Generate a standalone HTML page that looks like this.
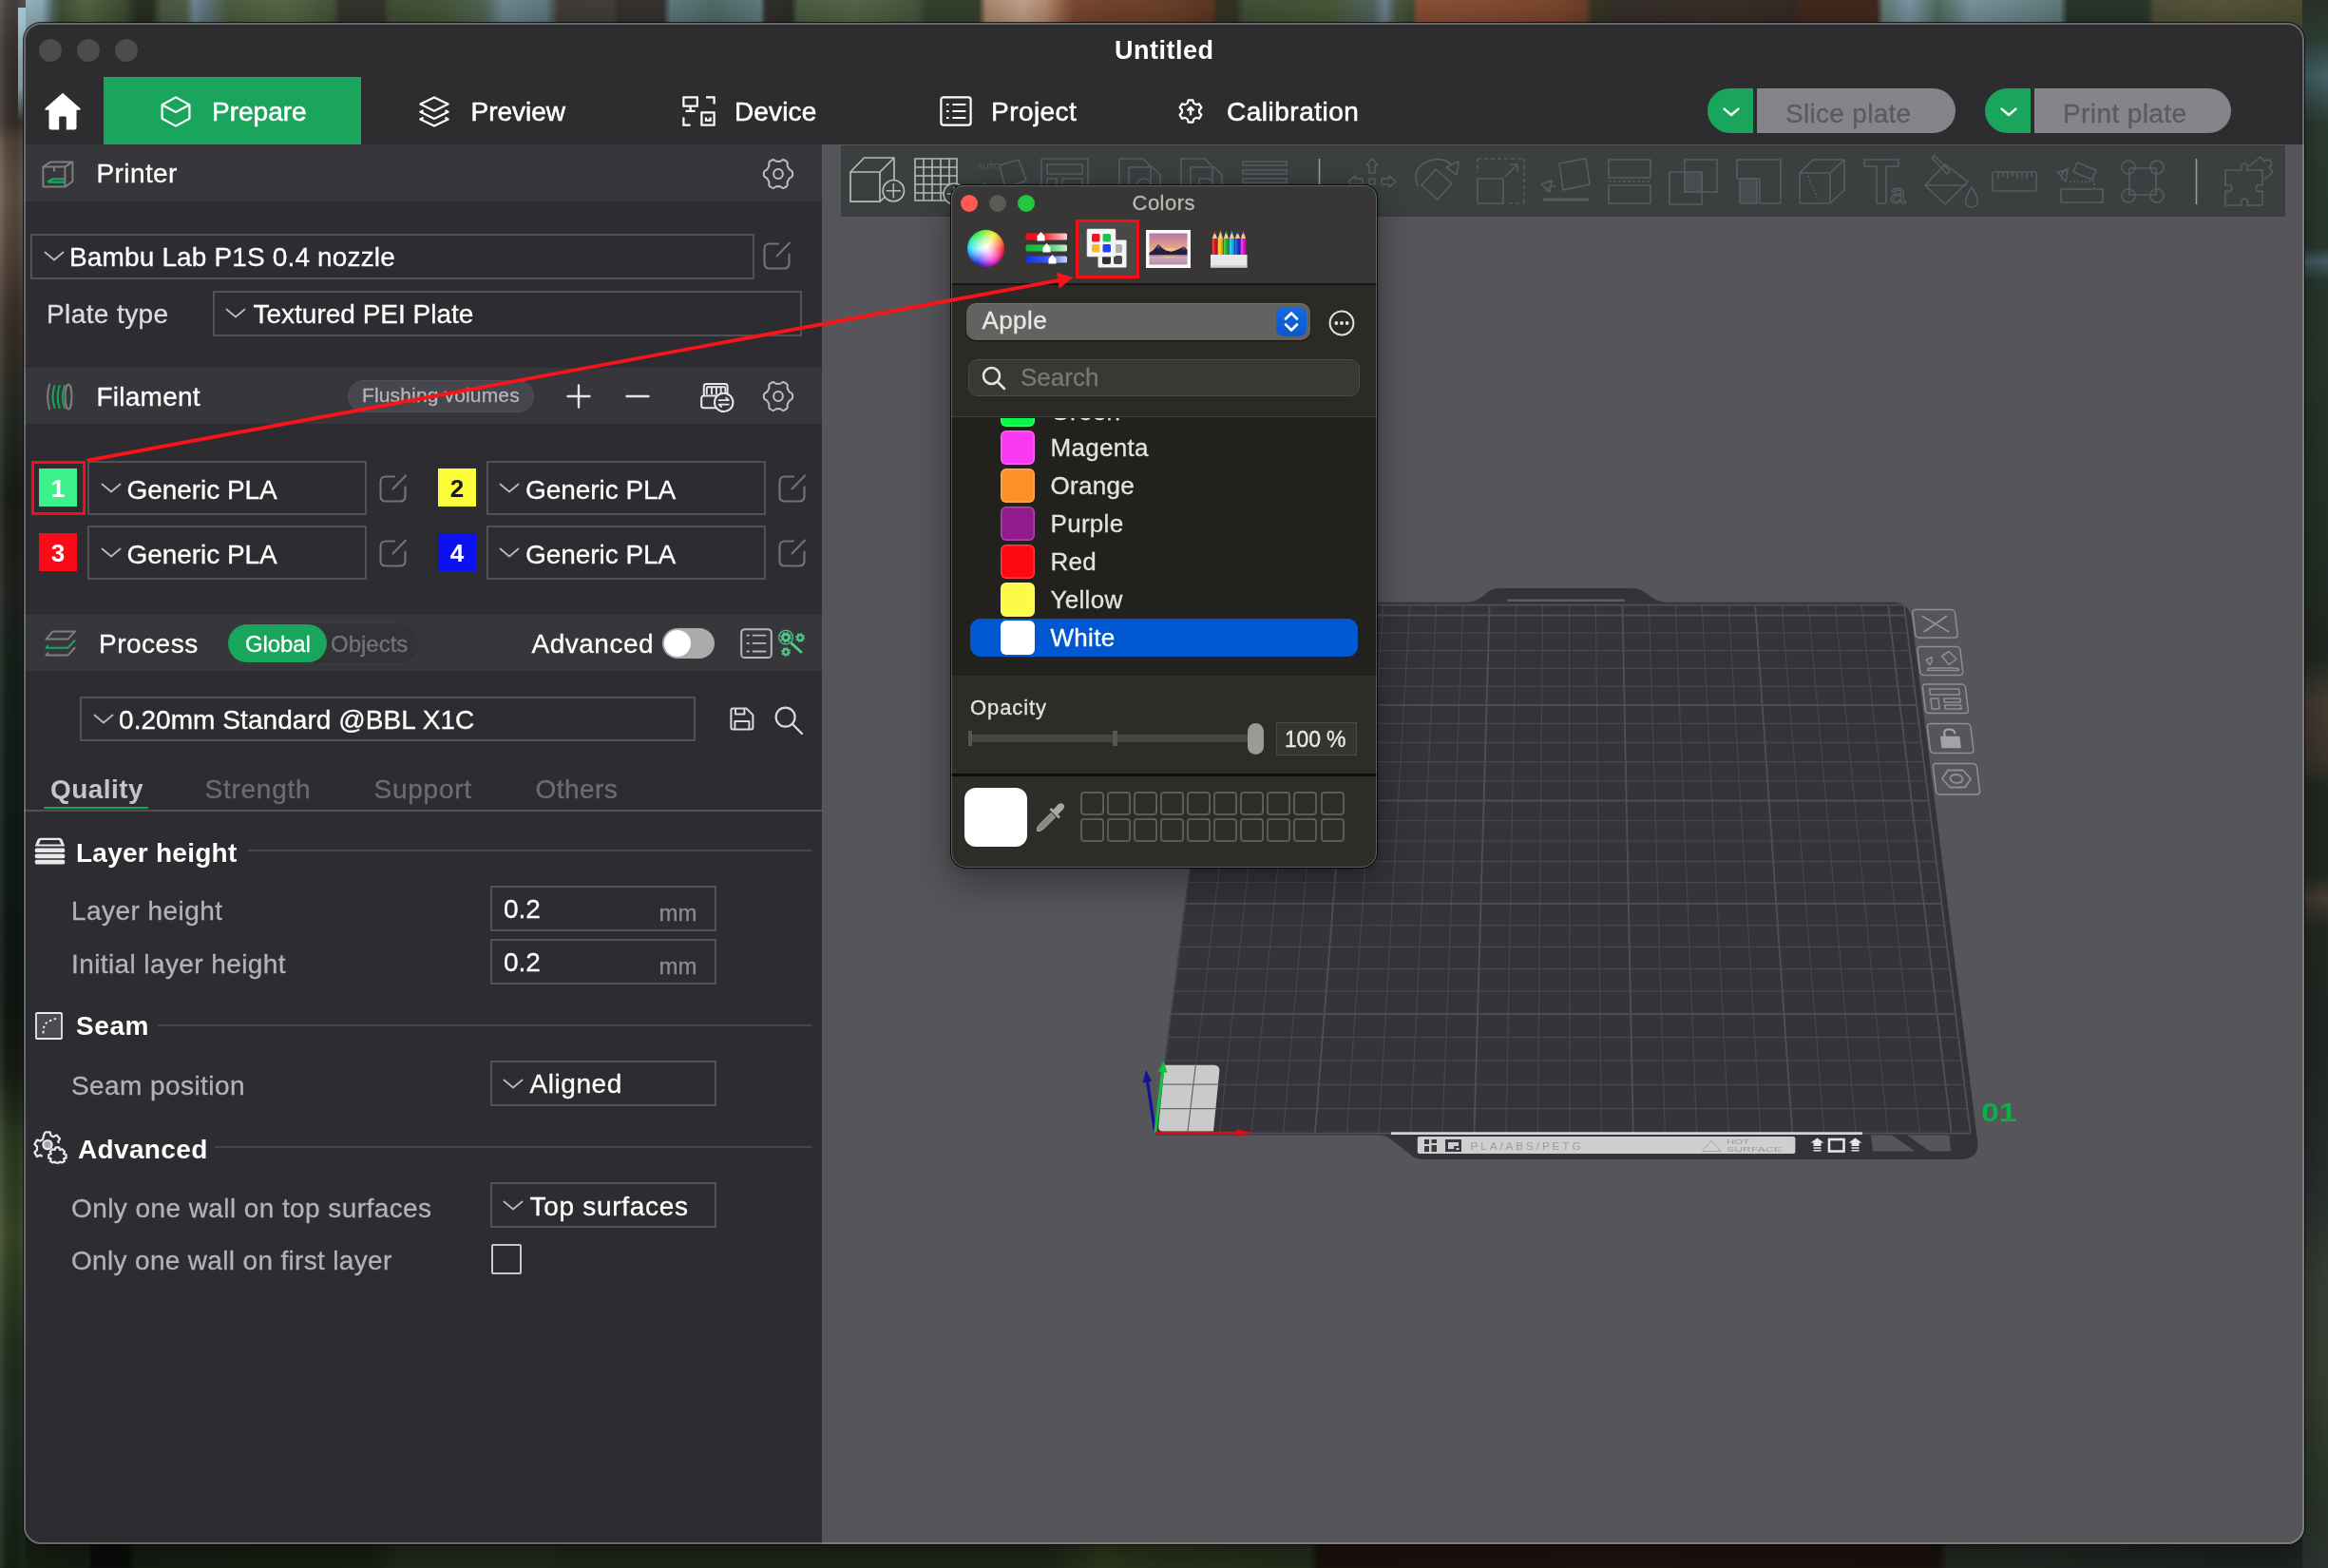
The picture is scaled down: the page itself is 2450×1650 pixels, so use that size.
<!DOCTYPE html>
<html><head><meta charset="utf-8"><title>Untitled</title>
<style>
*{box-sizing:border-box;margin:0;padding:0}
html,body{width:2450px;height:1650px;overflow:hidden}
body{font-family:"Liberation Sans",sans-serif;position:relative;background:#2f3a2c;color:#fff}
.a{position:absolute}
.t{position:absolute;white-space:pre;font-size:28px;line-height:34px;letter-spacing:.4px;color:#fff;-webkit-text-stroke:.3px}
svg{position:absolute;overflow:visible}
/* desktop wallpaper */
#bgT{left:0;top:0;width:2450px;height:46px;background:linear-gradient(180deg,rgba(0,0,0,.10),rgba(0,0,0,.22)),linear-gradient(90deg,#4a4440 0px,#4a4044 19px,#a4c8d4 24px,#9cc0cc 44px,#5a7068 56px,#4a5a3e 64px,#5f7048 90px,#46563a 130px,#2e3528 145px,#2e3528 160px,#55634a 170px,#5a6a50 195px,#7a98a8 205px,#6a8088 218px,#566848 240px,#62744e 300px,#4e5e40 350px,#3a3a34 358px,#3a3a34 403px,#48583c 410px,#506242 470px,#5a7060 510px,#7a98a0 530px,#6a8890 575px,#4a4440 588px,#4c4642 645px,#3c3836 652px,#3c3836 698px,#6a8890 706px,#5a7870 750px,#6a8a90 800px,#3a3632 806px,#33322c 832px,#55684a 840px,#5e7250 900px,#4e6044 965px,#3c4a34 975px,#3c4a34 1030px,#c0957a 1038px,#d8b49a 1075px,#c89c80 1100px,#a06a4a 1119px,#8a5238 1130px,#804c34 1165px,#7a4a30 1220px,#683e28 1275px,#3a3a2a 1282px,#3a3a2a 1300px,#4a5a3e 1310px,#52623f 1400px,#5a7068 1445px,#7a90a0 1458px,#52624a 1470px,#4a563a 1486px,#9a5a3c 1492px,#94563a 1560px,#8a4e32 1640px,#7a4630 1668px,#3c3a28 1676px,#3c3a28 1692px,#3c3430 1698px,#40362f 1800px,#3a302a 1888px,#4a2e22 1895px,#4a2e22 1975px,#6a8a80 1982px,#8aa8b8 2010px,#5a7868 2040px,#86a4b0 2075px,#7a98a0 2120px,#6a8888 2168px,#2e3e30 2176px,#2e3e30 2260px,#5a5a40 2268px,#62603f 2340px,#55563c 2428px,#2a2e28 2436px,#2a2e28 2450px)}
#bgB{left:0;top:1604px;width:2450px;height:46px;background:linear-gradient(90deg,#182215 0px,#182215 92px,#0b0f0a 98px,#0b0f0a 134px,#182214 142px,#192414 390px,#25301e 420px,#25301e 575px,#212c1b 600px,#212c1b 1100px,#323f21 1160px,#2c381f 1225px,#29351f 1378px,#1e140e 1388px,#221712 1700px,#1e140e 2040px,#292e28 2050px,#252b26 2250px,#1f2522 2450px)}
#bgL{left:0;top:0;width:27px;height:1650px;background:linear-gradient(90deg,rgba(255,255,255,.07) 0,rgba(0,0,0,.12) 7px,rgba(0,0,0,.18) 17px,rgba(0,0,0,0) 23px),linear-gradient(180deg,#544e4a 0px,#46403c 40px,#4a403a 130px,#6a5a4c 150px,#7a6a5a 200px,#6e5c4e 250px,#5a4a40 300px,#4a3e36 340px,#3a382f 400px,#2e3630 440px,#22261f 520px,#2a2c28 620px,#1c2a22 700px,#16221c 900px,#141c16 1050px,#1e261a 1130px,#3a4a2c 1200px,#4a5a34 1300px,#2e3e28 1420px,#28382e 1520px,#1e3020 1600px,#182818 1650px)}
#bgR{left:2423px;top:0;width:27px;height:1650px;background:linear-gradient(180deg,#2a2e28 0px,#2e3e34 40px,#4a6870 80px,#2e3e34 130px,#2a3a30 260px,#48646c 275px,#2a3a30 295px,#26322a 560px,#232a24 690px,#4a4034 740px,#3e382e 800px,#232a24 830px,#232a24 920px,#4a4034 945px,#262c24 975px,#222a26 1100px,#2a3230 1250px,#3a4238 1350px,#3a4236 1450px,#2e3a2c 1550px,#2c3430 1650px)}
/* main window */
#win{left:25px;top:24px;width:2400px;height:1601px;border-radius:18px;overflow:hidden;background:#2d2d30;box-shadow:0 0 0 1px rgba(0,0,0,.75),0 18px 50px rgba(0,0,0,.45)}
#in{left:-25px;top:-24px;width:2450px;height:1650px;will-change:transform}
#rim{left:25px;top:24px;width:2400px;height:1601px;border-radius:18px;border:2px solid rgba(165,165,170,.5);pointer-events:none}
.tl{width:24px;height:24px;border-radius:50%;background:#4c4c4f;top:41px}
.hdr{left:25px;width:840px;background:#36363b}
.box{border:2px solid #515157;background:#2d2d31}
</style></head><body>
<div class="a" id="bgT"></div><div class="a" id="bgB"></div><div class="a" id="bgL"></div><div class="a" id="bgR"></div><div class="a" id="sky1" style="left:19px;top:8px;width:8px;height:120px;background:linear-gradient(180deg,#a4c8d4 0,#9cc0cc 70%,rgba(150,180,190,0) 100%)"></div>
<div class="a" id="win"><div class="a" id="in">

<!-- TITLEBAR -->
<div class="a tl" style="left:41px"></div><div class="a tl" style="left:81px"></div><div class="a tl" style="left:121px"></div>
<div class="t" style="left:1173px;top:35.5px;font-weight:700;-webkit-text-stroke:0;font-size:27px;letter-spacing:.5px">Untitled</div>
<!--TABS-->
<svg style="left:47px;top:97px" width="38" height="40" viewBox="0 0 38 40"><path d="M19 .8 L37.6 17.2 Q38.3 18.6 36.8 18.8 L33.5 18.8 L33.5 37.6 Q33.5 39.4 31.7 39.4 L22.8 39.4 L22.8 27 Q22.8 25.6 21.4 25.6 L16.6 25.6 Q15.2 25.6 15.2 27 L15.2 39.4 L6.3 39.4 Q4.5 39.4 4.5 37.6 L4.5 18.8 L1.2 18.8 Q-.3 18.6 .4 17.2 Z" fill="#fff"/></svg>
<div class="a" style="left:109px;top:81px;width:271px;height:71px;background:#19a65c"></div>
<svg style="left:169px;top:101px" width="32" height="33" viewBox="0 0 32 33" fill="none" stroke="#fff" stroke-width="2.2" stroke-linejoin="round"><path d="M16 1.4 L30.4 9.2 L30.4 23.8 L16 31.6 L1.6 23.8 L1.6 9.2 Z"/><path d="M1.6 9.2 L16 17 L30.4 9.2"/></svg>
<div class="t" style="left:223px;top:101px;letter-spacing:0;-webkit-text-stroke:.55px">Prepare</div>
<svg style="left:441px;top:101px" width="32" height="33" viewBox="0 0 32 33" fill="none" stroke="#fff" stroke-width="2.2" stroke-linejoin="round"><path d="M16 1.4 L30.6 8.6 L16 15.8 L1.4 8.6 Z"/><path d="M4.6 15.2 L1.4 16.8 L16 24 L30.6 16.8 L27.4 15.2"/><path d="M4.6 22.8 L1.4 24.4 L16 31.6 L30.6 24.4 L27.4 22.8"/></svg>
<div class="t" style="left:495.5px;top:101px;letter-spacing:0;-webkit-text-stroke:.55px">Preview</div>
<svg style="left:718px;top:101px" width="35" height="32" viewBox="0 0 35 32" fill="none" stroke="#fff" stroke-width="2.2"><rect x="1.4" y="1.4" width="14.4" height="9.2"/><path d="M8.6 10.6 V15.6 M3.6 15.8 H13.6"/><path d="M25 1.4 H33.6 V8.6"/><path d="M1.4 22.6 V30.6 H8.6"/><rect x="20.4" y="17.4" width="13.2" height="13.2"/><path d="M25 22.6 V25.6 H29.6 V22.6"/></svg>
<div class="t" style="left:773px;top:101px;letter-spacing:.15px;-webkit-text-stroke:.55px">Device</div>
<svg style="left:989px;top:101px" width="34" height="32" viewBox="0 0 34 32" fill="none" stroke="#fff" stroke-width="2.2"><rect x="1.4" y="1.4" width="31.2" height="29.2" rx="2.5"/><path d="M7 9 H9.6 M13.4 9 H27.4 M7 16 H9.6 M13.4 16 H27.4 M7 23 H9.6 M13.4 23 H27.4"/></svg>
<div class="t" style="left:1043px;top:101px;letter-spacing:.45px;-webkit-text-stroke:.55px">Project</div>
<svg style="left:1240px;top:104px" width="26" height="26" viewBox="0 0 26 26" fill="none" stroke="#fff" stroke-width="2.2" stroke-linejoin="round"><path d="M10.6 1.4 H15.4 L16.2 4.6 L18.9 6.1 L22 5.2 L24.4 9.3 L22.1 11.6 V14.4 L24.4 16.7 L22 20.8 L18.9 19.9 L16.2 21.4 L15.4 24.6 H10.6 L9.8 21.4 L7.1 19.9 L4 20.8 L1.6 16.7 L3.9 14.4 V11.6 L1.6 9.3 L4 5.2 L7.1 6.1 L9.8 4.6 Z"/><path d="M13 17.6 V9.4 M9.6 12.4 L13 8.8 L16.4 12.4" stroke-width="2.4"/></svg>
<div class="t" style="left:1291px;top:101px;letter-spacing:.5px;-webkit-text-stroke:.55px">Calibration</div>
<!-- slice / print -->
<div class="a" style="left:1797px;top:93px;width:48px;height:47px;background:#19a65c;border-radius:24px 0 0 24px"></div>
<svg style="left:1813px;top:113px" width="18" height="10" viewBox="0 0 18 10" fill="none" stroke="#fff" stroke-width="2.4" stroke-linecap="round" stroke-linejoin="round"><path d="M1.6 1.6 L9 8 L16.4 1.6"/></svg>
<div class="a" style="left:1849px;top:93px;width:209px;height:47px;background:#858589;border-radius:0 24px 24px 0"></div>
<div class="t" style="left:1879px;top:102.5px;color:#5a5a61;letter-spacing:.3px">Slice plate</div>
<div class="a" style="left:2089px;top:93px;width:48px;height:47px;background:#19a65c;border-radius:24px 0 0 24px"></div>
<svg style="left:2105px;top:113px" width="18" height="10" viewBox="0 0 18 10" fill="none" stroke="#fff" stroke-width="2.4" stroke-linecap="round" stroke-linejoin="round"><path d="M1.6 1.6 L9 8 L16.4 1.6"/></svg>
<div class="a" style="left:2141px;top:93px;width:207px;height:47px;background:#858589;border-radius:0 24px 24px 0"></div>
<div class="t" style="left:2171px;top:102.5px;color:#5a5a61;letter-spacing:.4px">Print plate</div>

<!--SIDEBAR-->
<div class="a" style="left:25px;top:152px;width:840px;height:1480px;background:#2d2d31"></div>
<!-- printer -->
<div class="a hdr" style="top:152px;height:60px"></div>
<svg style="left:44px;top:169px" width="34" height="29" viewBox="0 0 34 29" fill="none" stroke="#7e7e82" stroke-width="2" stroke-linejoin="round"><path d="M1.4 6.6 H24.4 V27.6 H1.4 Z"/><path d="M1.4 6.6 L9.4 1.4 H32.4 L24.4 6.6"/><path d="M32.4 1.4 V22 L24.4 27.6"/><path d="M13 6.6 V11.4"/><path d="M6 22.6 L11.6 19.4 H24 M6.6 22.6 H24" stroke="#19a65c" stroke-width="2.4"/></svg>
<div class="t" style="left:101.5px;top:166px">Printer</div>
<svg style="left:802px;top:166px" width="34" height="34" viewBox="0 0 34 34" fill="none" stroke="#bebec2" stroke-width="2" stroke-linejoin="round"><path d="M32.1 17.0 L32.1 18.1 L32.0 19.2 L31.1 20.2 L29.9 21.0 L28.8 21.6 L28.2 22.4 L27.9 23.2 L27.4 24.0 L27.0 24.7 L26.6 25.6 L26.7 27.0 L26.7 28.5 L26.3 29.7 L25.4 30.4 L24.6 31.0 L23.6 31.5 L22.7 32.0 L21.5 31.7 L20.3 31.0 L19.2 30.2 L18.3 30.1 L17.4 30.2 L16.6 30.2 L15.7 30.1 L14.8 30.2 L13.7 31.0 L12.5 31.7 L11.3 32.0 L10.4 31.5 L9.5 31.0 L8.6 30.4 L7.7 29.7 L7.3 28.5 L7.3 27.0 L7.4 25.6 L7.0 24.7 L6.6 24.0 L6.1 23.2 L5.8 22.4 L5.2 21.6 L4.1 21.0 L2.9 20.2 L2.0 19.2 L1.9 18.1 L1.9 17.0 L1.9 15.9 L2.0 14.8 L2.9 13.8 L4.1 13.0 L5.2 12.4 L5.8 11.6 L6.1 10.8 L6.6 10.0 L7.0 9.3 L7.4 8.4 L7.3 7.0 L7.3 5.5 L7.7 4.3 L8.6 3.6 L9.4 3.0 L10.4 2.5 L11.3 2.0 L12.5 2.3 L13.7 3.0 L14.8 3.8 L15.7 3.9 L16.6 3.8 L17.4 3.8 L18.3 3.9 L19.2 3.8 L20.3 3.0 L21.5 2.3 L22.7 2.0 L23.6 2.5 L24.6 3.0 L25.4 3.6 L26.3 4.3 L26.7 5.5 L26.7 7.0 L26.6 8.4 L27.0 9.3 L27.4 10.0 L27.9 10.8 L28.2 11.6 L28.8 12.4 L29.9 13.0 L31.1 13.8 L32.0 14.8 L32.1 15.9 Z"/><circle cx="17" cy="17" r="4.9"/></svg>
<div class="a box" style="left:32px;top:246px;width:762px;height:48px"></div>
<svg style="left:46px;top:263.5px" width="22" height="12" viewBox="0 0 22 12" fill="none" stroke="#b9b9bd" stroke-width="1.8" stroke-linecap="round" stroke-linejoin="round"><path d="M1.5 1.5 L11 9.5 L20.5 1.5"/></svg>
<div class="t" style="left:73px;top:254px;letter-spacing:.15px">Bambu Lab P1S 0.4 nozzle</div>
<svg style="left:802.5px;top:253.5px" width="30" height="30" viewBox="0 0 30 30" fill="none" stroke="#727277" stroke-width="2.1" stroke-linecap="round" stroke-linejoin="round"><path d="M16 2.5 H7 Q1.5 2.5 1.5 8 V23 Q1.5 28.5 7 28.5 H22 Q27.5 28.5 27.5 23 V13.5"/><path d="M14.5 15.5 L28 1.5"/></svg>
<div class="t" style="left:49px;top:314px;color:#dcdce0">Plate type</div>
<div class="a box" style="left:224px;top:306px;width:620px;height:48px"></div>
<svg style="left:237px;top:323.5px" width="22" height="12" viewBox="0 0 22 12" fill="none" stroke="#b9b9bd" stroke-width="1.8" stroke-linecap="round" stroke-linejoin="round"><path d="M1.5 1.5 L11 9.5 L20.5 1.5"/></svg>
<div class="t" style="left:266.5px;top:314px;letter-spacing:0">Textured PEI Plate</div>
<!-- filament -->
<div class="a hdr" style="top:387px;height:59px"></div>
<svg style="left:47px;top:403px" width="30" height="29" viewBox="0 0 30 29" fill="none" stroke-width="2" stroke-linecap="round"><path d="M5.2 1.5 Q1 14.5 5.2 27.5" stroke="#7e7e82"/><path d="M10.4 3 Q6.6 14.5 10.4 26" stroke="#19a65c"/><path d="M15.6 3 Q11.8 14.5 15.6 26" stroke="#19a65c"/><path d="M20.8 3 Q17 14.5 20.8 26" stroke="#19a65c"/><ellipse cx="25" cy="14.5" rx="3.4" ry="13" stroke="#7e7e82"/></svg>
<div class="t" style="left:101.5px;top:400.5px;letter-spacing:.25px">Filament</div>
<div class="a" style="left:366px;top:400px;width:196px;height:34px;border-radius:17px;background:#46464d;border:1px solid #505057"></div>
<div class="t" style="left:381px;top:400px;font-size:21px;line-height:32px;letter-spacing:.15px;color:#b4b4b9">Flushing volumes</div>
<svg style="left:596px;top:404px" width="26" height="26" viewBox="0 0 26 26" stroke="#e6e6e8" stroke-width="2.4" stroke-linecap="round"><path d="M13 1.5 V24.5 M1.5 13 H24.5"/></svg>
<svg style="left:658px;top:404px" width="26" height="26" viewBox="0 0 26 26" stroke="#e6e6e8" stroke-width="2.4" stroke-linecap="round"><path d="M1.5 13 H24.5"/></svg>
<svg style="left:737px;top:403px" width="36" height="31" viewBox="0 0 36 31" fill="none" stroke="#e8e8ea" stroke-width="2" stroke-linejoin="round" stroke-linecap="round"><rect x="3.8" y="1" width="24.8" height="14" rx="2.5"/><path d="M6.8 4.2 H26.4 M6.8 4.2 V12 M12 4.2 V12 M16.9 4.2 V12 M21.7 4.2 V12 M26.4 4.2 V12" stroke-width="1.9" stroke-linecap="butt"/><rect x="1.2" y="13.6" width="26" height="12.6" rx="2.5" fill="#36363b"/><circle cx="24.7" cy="20.4" r="9.7" fill="#36363b"/><path d="M19.6 18.2 H29.8 L27.3 15.8 M29.8 22.6 H19.6 L22.1 25" stroke-width="1.8"/></svg>
<svg style="left:802px;top:400px" width="34" height="34" viewBox="0 0 34 34" fill="none" stroke="#bebec2" stroke-width="2" stroke-linejoin="round"><path d="M32.1 17.0 L32.1 18.1 L32.0 19.2 L31.1 20.2 L29.9 21.0 L28.8 21.6 L28.2 22.4 L27.9 23.2 L27.4 24.0 L27.0 24.7 L26.6 25.6 L26.7 27.0 L26.7 28.5 L26.3 29.7 L25.4 30.4 L24.6 31.0 L23.6 31.5 L22.7 32.0 L21.5 31.7 L20.3 31.0 L19.2 30.2 L18.3 30.1 L17.4 30.2 L16.6 30.2 L15.7 30.1 L14.8 30.2 L13.7 31.0 L12.5 31.7 L11.3 32.0 L10.4 31.5 L9.5 31.0 L8.6 30.4 L7.7 29.7 L7.3 28.5 L7.3 27.0 L7.4 25.6 L7.0 24.7 L6.6 24.0 L6.1 23.2 L5.8 22.4 L5.2 21.6 L4.1 21.0 L2.9 20.2 L2.0 19.2 L1.9 18.1 L1.9 17.0 L1.9 15.9 L2.0 14.8 L2.9 13.8 L4.1 13.0 L5.2 12.4 L5.8 11.6 L6.1 10.8 L6.6 10.0 L7.0 9.3 L7.4 8.4 L7.3 7.0 L7.3 5.5 L7.7 4.3 L8.6 3.6 L9.4 3.0 L10.4 2.5 L11.3 2.0 L12.5 2.3 L13.7 3.0 L14.8 3.8 L15.7 3.9 L16.6 3.8 L17.4 3.8 L18.3 3.9 L19.2 3.8 L20.3 3.0 L21.5 2.3 L22.7 2.0 L23.6 2.5 L24.6 3.0 L25.4 3.6 L26.3 4.3 L26.7 5.5 L26.7 7.0 L26.6 8.4 L27.0 9.3 L27.4 10.0 L27.9 10.8 L28.2 11.6 L28.8 12.4 L29.9 13.0 L31.1 13.8 L32.0 14.8 L32.1 15.9 Z"/><circle cx="17" cy="17" r="4.9"/></svg>
<!-- filament rows -->
<div class="a" style="left:33px;top:484.5px;width:57px;height:57.5px;border:3.6px solid #f50e16"></div>
<div class="a" style="left:41px;top:493px;width:40px;height:40px;background:#3cf08c"></div>
<div class="t" style="left:41px;top:497px;width:40px;text-align:center;font-size:26px;font-weight:700;-webkit-text-stroke:0;letter-spacing:0">1</div>
<div class="a box" style="left:92px;top:485px;width:294px;height:57px"></div>
<svg style="left:106px;top:507.5px" width="22" height="12" viewBox="0 0 22 12" fill="none" stroke="#b9b9bd" stroke-width="1.8" stroke-linecap="round" stroke-linejoin="round"><path d="M1.5 1.5 L11 9.5 L20.5 1.5"/></svg>
<div class="t" style="left:133.5px;top:499px;letter-spacing:-.05px">Generic PLA</div>
<svg style="left:398.5px;top:498.5px" width="30" height="30" viewBox="0 0 30 30" fill="none" stroke="#727277" stroke-width="2.1" stroke-linecap="round" stroke-linejoin="round"><path d="M16 2.5 H7 Q1.5 2.5 1.5 8 V23 Q1.5 28.5 7 28.5 H22 Q27.5 28.5 27.5 23 V13.5"/><path d="M14.5 15.5 L28 1.5"/></svg>
<div class="a" style="left:461px;top:493px;width:40px;height:40px;background:#fdfd3c"></div>
<div class="t" style="left:461px;top:497px;width:40px;text-align:center;font-size:26px;font-weight:700;-webkit-text-stroke:0;letter-spacing:0;color:#1a1a1a">2</div>
<div class="a box" style="left:512px;top:485px;width:294px;height:57px"></div>
<svg style="left:525px;top:507.5px" width="22" height="12" viewBox="0 0 22 12" fill="none" stroke="#b9b9bd" stroke-width="1.8" stroke-linecap="round" stroke-linejoin="round"><path d="M1.5 1.5 L11 9.5 L20.5 1.5"/></svg>
<div class="t" style="left:553px;top:499px;letter-spacing:-.05px">Generic PLA</div>
<svg style="left:818.5px;top:498.5px" width="30" height="30" viewBox="0 0 30 30" fill="none" stroke="#727277" stroke-width="2.1" stroke-linecap="round" stroke-linejoin="round"><path d="M16 2.5 H7 Q1.5 2.5 1.5 8 V23 Q1.5 28.5 7 28.5 H22 Q27.5 28.5 27.5 23 V13.5"/><path d="M14.5 15.5 L28 1.5"/></svg>
<div class="a" style="left:41px;top:561px;width:40px;height:40px;background:#fb0a18"></div>
<div class="t" style="left:41px;top:565px;width:40px;text-align:center;font-size:26px;font-weight:700;-webkit-text-stroke:0;letter-spacing:0">3</div>
<div class="a box" style="left:92px;top:553px;width:294px;height:57px"></div>
<svg style="left:106px;top:575.5px" width="22" height="12" viewBox="0 0 22 12" fill="none" stroke="#b9b9bd" stroke-width="1.8" stroke-linecap="round" stroke-linejoin="round"><path d="M1.5 1.5 L11 9.5 L20.5 1.5"/></svg>
<div class="t" style="left:133.5px;top:567px;letter-spacing:-.05px">Generic PLA</div>
<svg style="left:398.5px;top:566.5px" width="30" height="30" viewBox="0 0 30 30" fill="none" stroke="#727277" stroke-width="2.1" stroke-linecap="round" stroke-linejoin="round"><path d="M16 2.5 H7 Q1.5 2.5 1.5 8 V23 Q1.5 28.5 7 28.5 H22 Q27.5 28.5 27.5 23 V13.5"/><path d="M14.5 15.5 L28 1.5"/></svg>
<div class="a" style="left:461px;top:561px;width:40px;height:40px;background:#0a12f0"></div>
<div class="t" style="left:461px;top:565px;width:40px;text-align:center;font-size:26px;font-weight:700;-webkit-text-stroke:0;letter-spacing:0">4</div>
<div class="a box" style="left:512px;top:553px;width:294px;height:57px"></div>
<svg style="left:525px;top:575.5px" width="22" height="12" viewBox="0 0 22 12" fill="none" stroke="#b9b9bd" stroke-width="1.8" stroke-linecap="round" stroke-linejoin="round"><path d="M1.5 1.5 L11 9.5 L20.5 1.5"/></svg>
<div class="t" style="left:553px;top:567px;letter-spacing:-.05px">Generic PLA</div>
<svg style="left:818.5px;top:566.5px" width="30" height="30" viewBox="0 0 30 30" fill="none" stroke="#727277" stroke-width="2.1" stroke-linecap="round" stroke-linejoin="round"><path d="M16 2.5 H7 Q1.5 2.5 1.5 8 V23 Q1.5 28.5 7 28.5 H22 Q27.5 28.5 27.5 23 V13.5"/><path d="M14.5 15.5 L28 1.5"/></svg>
<!-- process -->
<div class="a hdr" style="top:647px;height:59px"></div>
<svg style="left:47px;top:663px" width="34" height="28" viewBox="0 0 34 28" fill="none" stroke-width="2" stroke-linecap="round" stroke-linejoin="round"><path d="M8.6 1.4 H32 L24.4 9.6 H1.4 Z" stroke="#7e7e82"/><path d="M3.4 16.6 L1.4 18.8 H24.4 L31.6 11" stroke="#19a65c"/><path d="M3.4 24.4 L1.4 26.6 H24.4 L31.6 18.8" stroke="#7e7e82"/></svg>
<div class="t" style="left:104px;top:660.5px;letter-spacing:.5px">Process</div>
<div class="a" style="left:238px;top:655px;width:204px;height:44px;border-radius:22px;background:#323237;border:1px solid #3c3c42"></div>
<div class="a" style="left:240px;top:657px;width:104px;height:40px;border-radius:20px;background:#19a65c"></div>
<div class="t" style="left:258px;top:661px;font-size:24px;letter-spacing:-.1px">Global</div>
<div class="t" style="left:348px;top:661px;font-size:24px;letter-spacing:0;color:#737378">Objects</div>
<div class="t" style="left:559.5px;top:660.5px;letter-spacing:.5px">Advanced</div>
<div class="a" style="left:697px;top:661px;width:55px;height:32px;border-radius:16px;background:#ababab"></div>
<div class="a" style="left:698.5px;top:662.6px;width:28.8px;height:28.8px;border-radius:15px;background:#fff"></div>
<svg style="left:779px;top:661px" width="34" height="32" viewBox="0 0 34 32" fill="none" stroke="#b6b6ba" stroke-width="2" stroke-linecap="round"><rect x="1.2" y="1.2" width="31.6" height="29.8" rx="3.6"/><path d="M7.4 7.7 H9 M13.6 7.7 H26.6 M7.4 15.9 H9 M13.6 15.9 H26.6 M7.4 24.5 H9 M13.6 24.5 H26.6" stroke-width="1.8"/></svg>
<svg style="left:819px;top:662px" width="30" height="30" viewBox="0 0 30 30" fill="none" stroke="#50c88a"><circle cx="8.05" cy="8.7" r="7.4" stroke-width="1.2"/><circle cx="8.05" cy="8.7" r="3.4" stroke-width="2.8"/><circle cx="8.05" cy="8.7" r="5.2" stroke-width="1.5" stroke-dasharray="1.9 2.184"/><path d="M13.9 14.8 L23.9 24" stroke-width="3" stroke-linecap="round"/><circle cx="23.1" cy="9" r="2.8" stroke-width="2.2"/><circle cx="23.1" cy="9" r="4.3" stroke-width="1.4" stroke-dasharray="1.6 1.777"/><circle cx="8.05" cy="24" r="2.8" stroke-width="2.2"/><circle cx="8.05" cy="24" r="4.3" stroke-width="1.4" stroke-dasharray="1.6 1.777"/></svg>
<div class="a box" style="left:84px;top:733px;width:648px;height:47px"></div>
<svg style="left:98px;top:750.5px" width="22" height="12" viewBox="0 0 22 12" fill="none" stroke="#b9b9bd" stroke-width="1.8" stroke-linecap="round" stroke-linejoin="round"><path d="M1.5 1.5 L11 9.5 L20.5 1.5"/></svg>
<div class="t" style="left:125px;top:741px;letter-spacing:.06px">0.20mm Standard @BBL X1C</div>
<svg style="left:768px;top:744px" width="26" height="25" viewBox="0 0 26 25" fill="none" stroke="#dadade" stroke-width="2" stroke-linejoin="round"><path d="M1.4 3.4 Q1.4 1.4 3.4 1.4 H17.4 L24.4 8.4 V21.6 Q24.4 23.6 22.4 23.6 H3.4 Q1.4 23.6 1.4 21.6 Z"/><path d="M6 1.6 V7.6 H15.4 V1.6 M5.4 23.4 V15 H20.4 V23.4"/></svg>
<svg style="left:815px;top:743px" width="31" height="31" viewBox="0 0 31 31" fill="none" stroke="#dadade" stroke-width="2.2" stroke-linecap="round"><circle cx="11.6" cy="11.6" r="10"/><path d="M19 19 L29 29"/></svg>
<!-- tabs -->
<div class="t" style="left:53px;top:814px;font-weight:700;-webkit-text-stroke:0;color:#c6c6ca;letter-spacing:.45px">Quality</div>
<div class="t" style="left:215.5px;top:814px;color:#6c6c72;letter-spacing:.75px">Strength</div>
<div class="t" style="left:393.5px;top:814px;color:#6c6c72;letter-spacing:.75px">Support</div>
<div class="t" style="left:563.5px;top:814px;color:#6c6c72;letter-spacing:.45px">Others</div>
<div class="a" style="left:46px;top:848.5px;width:110px;height:2.2px;background:#19a65c;border-radius:2px"></div>
<div class="a" style="left:25px;top:852px;width:840px;height:2px;background:#505056"></div>
<!-- layer height -->
<svg style="left:36px;top:881px" width="33" height="29" viewBox="0 0 33 29" fill="#e8e8ea"><path d="M6.5 .8 H26.5 Q28.6 .8 29.6 2.8 L32.2 9.6 H.8 L3.4 2.8 Q4.4 .8 6.5 .8 Z M6.8 3 L4.6 7.6 H28.4 L26.2 3 Z" fill-rule="evenodd"/><rect x=".8" y="11.4" width="31.4" height="4.6" rx="1.6"/><rect x=".8" y="17.6" width="31.4" height="4.6" rx="1.6"/><rect x=".8" y="23.8" width="31.4" height="4.6" rx="1.6"/></svg>
<div class="t" style="left:80px;top:880.5px;font-weight:700;-webkit-text-stroke:0;letter-spacing:.25px">Layer height</div>
<div class="a" style="left:261px;top:894px;width:594px;height:2px;background:#46464c"></div>
<div class="t" style="left:75px;top:942px;color:#b2b2b7;letter-spacing:0.45px">Layer height</div>
<div class="a box" style="left:516px;top:932px;width:238px;height:48px"></div>
<div class="t" style="left:530px;top:940px;letter-spacing:0">0.2</div>
<div class="t" style="left:693.5px;top:944px;font-size:24px;color:#8c8c92;letter-spacing:0">mm</div>
<div class="t" style="left:75px;top:998px;color:#b2b2b7;letter-spacing:.4px">Initial layer height</div>
<div class="a box" style="left:516px;top:988px;width:238px;height:48px"></div>
<div class="t" style="left:530px;top:996px;letter-spacing:0">0.2</div>
<div class="t" style="left:693.5px;top:1000px;font-size:24px;color:#8c8c92;letter-spacing:0">mm</div>
<!-- seam -->
<svg style="left:37px;top:1065px" width="29" height="29" viewBox="0 0 29 29" fill="none" stroke="#e8e8ea" stroke-width="1.8"><rect x="1" y="1" width="27" height="27" rx="1" fill="#4b4b53"/><path d="M8.5 22.5 Q8.5 13 13 10.5 Q17 8.5 23.5 6" stroke-dasharray="2.4 2.8" stroke-width="2"/></svg>
<div class="t" style="left:80px;top:1063px;font-weight:700;-webkit-text-stroke:0;letter-spacing:.6px">Seam</div>
<div class="a" style="left:166px;top:1078px;width:689px;height:2px;background:#46464c"></div>
<div class="t" style="left:75px;top:1126px;color:#b2b2b7;letter-spacing:.42px">Seam position</div>
<div class="a box" style="left:516px;top:1116px;width:238px;height:48px"></div>
<svg style="left:529px;top:1134.5px" width="22" height="12" viewBox="0 0 22 12" fill="none" stroke="#b9b9bd" stroke-width="1.8" stroke-linecap="round" stroke-linejoin="round"><path d="M1.5 1.5 L11 9.5 L20.5 1.5"/></svg>
<div class="t" style="left:557.5px;top:1124px;letter-spacing:.55px">Aligned</div>
<!-- advanced -->
<svg style="left:35px;top:1190px" width="37" height="34" viewBox="0 0 37 34" fill="none" stroke="#e8e8ea" stroke-width="2.2" stroke-linejoin="round"><path d="M12.4 1.4 H17.6 L18.6 5 L21.2 6.2 L24.6 4.6 L28 8.2 L26.2 11.4 L27 13 M9.6 27 L7.4 25.4 L4 27.2 L1.4 22.6 L4 20 V16.6 L1.4 14 L4 9.6 L7.4 10.6 L10 9 L11 5 L12.4 1.4"/><circle cx="15" cy="14.6" r="4.6" fill="#a8a8ac" stroke="#e8e8ea"/><path d="M23.6 17.4 H27.2 L28 20 L30.4 19.2 L33 21.8 L32 24.2 L34.6 25 V28.6 L32 29.4 L33 31.8 L30.4 33.4 L28 32.6 L27.2 33.6 H23.6 L22.8 32.6 L20.4 33.4 L17.8 31.8 L18.8 29.4 L16.2 28.6 V25 L18.8 24.2 L17.8 21.8 L20.4 19.2 L22.8 20 Z" fill="#2d2d31"/></svg>
<div class="t" style="left:82px;top:1192.5px;font-weight:700;-webkit-text-stroke:0;letter-spacing:.35px">Advanced</div>
<div class="a" style="left:226px;top:1206px;width:629px;height:2px;background:#46464c"></div>
<div class="t" style="left:75px;top:1254.5px;color:#b2b2b7;letter-spacing:0.42px">Only one wall on top surfaces</div>
<div class="a box" style="left:516px;top:1244px;width:238px;height:48px"></div>
<svg style="left:529px;top:1262.5px" width="22" height="12" viewBox="0 0 22 12" fill="none" stroke="#b9b9bd" stroke-width="1.8" stroke-linecap="round" stroke-linejoin="round"><path d="M1.5 1.5 L11 9.5 L20.5 1.5"/></svg>
<div class="t" style="left:557.5px;top:1252.5px;letter-spacing:.7px">Top surfaces</div>
<div class="t" style="left:75px;top:1310px;color:#b2b2b7;letter-spacing:.33px">Only one wall on first layer</div>
<div class="a" style="left:517px;top:1309px;width:32px;height:32px;border:2px solid #c9c9cd;border-radius:2px"></div>


<!--CANVAS-->
<div class="a" style="left:865px;top:152px;width:1562px;height:1476px;background:#55555a"></div>
<div class="a" style="left:885px;top:153px;width:1520px;height:74.5px;background:#3a3f40"></div>
<svg style="left:0;top:0" width="2450" height="1650" viewBox="0 0 2450 1650"><g transform="translate(894,165)" stroke="#b8bab9" stroke-width="1.7" fill="none" stroke-linejoin="round"><path d="M1 16 H32 V47.2 H1 Z M1 16 L15.5 1 H47 L32 16 M47 1 V30 M32 47.2 L40 39.5"/><circle cx="46.3" cy="35.7" r="11.2" fill="#3a3f40"/><path d="M46.3 28 V43.4 M38.6 35.7 H54" stroke-width="1.5"/></g><g transform="translate(962,166)" stroke="#b8bab9" stroke-width="1.6" fill="none" stroke-linejoin="round"><path d="M1 1 H45 V45 H1 Z M10 1 V45 M19 1 V45 M28 1 V45 M37 1 V45 M1 10 H45 M1 19 H45 M1 28 H45 M1 37 H45"/><circle cx="42" cy="38" r="11" fill="#3a3f40"/><path d="M42 31 V45 M35 38 H49"/></g><g transform="translate(1028,166)" stroke="#575c5f" stroke-width="1.6" fill="none" stroke-linejoin="round"><path d="M24 8 L44 2 L52 24 L30 32 Z M4 44 H50 M8 26 L4 36 L14 34"/><text x="0" y="12" font-size="9" font-family="Liberation Sans" fill="#575c5f" stroke="none">AUTO</text></g><g transform="translate(1095,166)" stroke="#575c5f" stroke-width="1.6" fill="none" stroke-linejoin="round"><rect x="1" y="1" width="49" height="46"/><rect x="7" y="7" width="37" height="10"/><rect x="7" y="22" width="10" height="19"/><rect x="23" y="22" width="21" height="7"/><rect x="23" y="34" width="21" height="7"/></g><g transform="translate(1177,166)" stroke="#575c5f" stroke-width="1.6" fill="none" stroke-linejoin="round"><path d="M1 1 H26 L34 9 V40 H1 Z M11 10 H36 L44 18 V47 H11 Z"/><circle cx="27" cy="30" r="8"/></g><g transform="translate(1242,166)" stroke="#575c5f" stroke-width="1.6" fill="none" stroke-linejoin="round"><path d="M1 1 H26 L34 9 V40 H1 Z M11 10 H36 L44 18 V47 H11 Z"/><path d="M20 40 V22 H29 Q34 22 34 27 Q34 32 29 32 H20"/></g><g transform="translate(1308,170)" stroke="#575c5f" stroke-width="1.6" fill="none" stroke-linejoin="round"><rect x="0" y="0" width="46" height="4"/><rect x="0" y="9" width="46" height="4"/><rect x="0" y="18" width="46" height="4"/><rect x="0" y="27" width="46" height="4"/></g><path d="M1388.5 167 V215" stroke="#9a9a9a" stroke-width="1.6"/><g transform="translate(1418,166)" stroke="#575c5f" stroke-width="1.6" fill="none" stroke-linejoin="round"><path d="M26 1 L32 8 H29 V16 H23 V8 H20 Z M51 25 L44 31 V28 H36 V22 H44 V19 Z M1 25 L8 19 V22 H16 V28 H8 V31 Z M26 49 L20 42 H23 V34 H29 V42 H32 Z"/><rect x="23" y="22" width="6" height="6"/></g><g transform="translate(1486,166)" stroke="#575c5f" stroke-width="1.6" fill="none" stroke-linejoin="round"><path d="M25 12 L42 27 L27 44 L10 29 Z"/><path d="M6 30 Q-2 8 22 2 Q36 0 42 8 M36 10 L49 4 L47 18 Z"/></g><g transform="translate(1554,166)" stroke="#575c5f" stroke-width="1.6" fill="none" stroke-linejoin="round"><rect x="1" y="22" width="27" height="26"/><path d="M1 1 H50 V48" stroke-dasharray="4 3"/><path d="M1 1 V16 M34 48 H50" stroke-dasharray="4 3"/><path d="M30 20 L43 7 M35 7 H43 V15"/></g><g transform="translate(1621,166)" stroke="#575c5f" stroke-width="1.6" fill="none" stroke-linejoin="round"><path d="M20 6 L48 1 L52 28 L24 34 Z"/><path d="M4 44 H50" stroke-width="3" stroke-linecap="round"/><path d="M16 30 Q6 30 6 36 M1 28 L12 24 L10 36 Z"/></g><g transform="translate(1692,167)" stroke="#575c5f" stroke-width="1.6" fill="none" stroke-linejoin="round"><rect x="1" y="1" width="44" height="19"/><rect x="1" y="28" width="44" height="19"/><path d="M1 24 H45" stroke-dasharray="3 2"/></g><g transform="translate(1756,167)" stroke="#575c5f" stroke-width="1.6" fill="none" stroke-linejoin="round"><rect x="17" y="1" width="34" height="34"/><rect x="1" y="14" width="34" height="34"/><path d="M17 14 H35 V35 H17 Z" fill="#474c4f"/></g><g transform="translate(1827,167)" stroke="#575c5f" stroke-width="1.6" fill="none" stroke-linejoin="round"><path d="M1 1 H47 V47 H25 V21 H1 Z"/><path d="M4 21 H22 V47 H4 Z" fill="#474c4f"/></g><g transform="translate(1893,167)" stroke="#575c5f" stroke-width="1.6" fill="none" stroke-linejoin="round"><path d="M1 15 H33 V47 H1 Z M1 15 L15 1 H48 L33 15 M48 1 V33 L33 47"/><path d="M10 18 L13 28 L17 34 L20 44" stroke-dasharray="2 2"/></g><g transform="translate(1961,167)" stroke="#575c5f" stroke-width="1.6" fill="none" stroke-linejoin="round"><path d="M1 1 H37 V8 H24 V47 H14 V8 H1 Z"/><text x="28" y="47" font-size="30" font-family="Liberation Sans" fill="none" stroke="#575c5f" stroke-width="1.4">a</text></g><g transform="translate(2025,165)" stroke="#575c5f" stroke-width="1.6" fill="none" stroke-linejoin="round"><path d="M22 8 L46 26 L22 50 L1 30 Z M1 30 H44"/><path d="M8 1 L24 18 L27 15 L11 -1 Z"/><path d="M50 32 Q42 44 44 50 Q50 56 56 50 Q58 44 50 32 Z"/></g><g transform="translate(2097,181)" stroke="#575c5f" stroke-width="1.6" fill="none" stroke-linejoin="round"><rect x="0" y="0" width="46" height="20" rx="2"/><path d="M6 0 V7 M11 0 V5 M16 0 V7 M21 0 V5 M26 0 V7 M31 0 V5 M36 0 V7 M41 0 V5"/></g><g transform="translate(2164,167)" stroke="#575c5f" stroke-width="1.6" fill="none" stroke-linejoin="round"><rect x="5" y="32" width="44" height="14"/><path d="M22 4 L42 12 L38 22 L18 14 Z"/><path d="M14 24 H40 V32 H14" stroke-dasharray="2 2"/><path d="M14 10 Q4 12 6 22 M1 14 L12 12 L10 24 Z"/></g><g transform="translate(2232,168)" stroke="#575c5f" stroke-width="1.6" fill="none" stroke-linejoin="round"><rect x="9" y="9" width="28" height="28"/><circle cx="8" cy="8" r="7"/><circle cx="38" cy="8" r="7"/><circle cx="8" cy="38" r="7"/><circle cx="38" cy="38" r="7"/></g><path d="M2311.5 167 V215" stroke="#9a9a9a" stroke-width="1.6"/><g transform="translate(2341,165)" stroke="#575c5f" stroke-width="1.6" fill="none" stroke-linejoin="round"><path d="M1 14 H18 Q16 8 21 7 Q26 8 24 14 H40 V30 Q34 28 33 33 Q34 38 40 36 V51 H24 Q26 45 21 44 Q16 45 18 51 H1 V36 Q7 38 8 33 Q7 28 1 30 Z"/><path d="M26 10 L38 0 L42 5 Q46 1 49 5 Q51 9 47 11 L51 16 L42 24"/></g></svg>
<svg style="left:0;top:0" width="2450" height="1650" viewBox="0 0 2450 1650"><g transform="translate(2012.5,641.5) skewX(7)" stroke="#8e8e94" stroke-width="1.5" fill="none" stroke-linejoin="round" stroke-linecap="round"><rect x="0" y="0" width="44.5" height="29.5" rx="3.5"/><path d="M10 7 L35 23 M35 7 L10 23" stroke-width="2"/></g><g transform="translate(2017.5,680.5) skewX(7)" stroke="#8e8e94" stroke-width="1.5" fill="none" stroke-linejoin="round" stroke-linecap="round"><rect x="0" y="0" width="45" height="30" rx="3.5"/><path d="M25 10 L33 5 L40 13 L31 19 Z M9 25 H40" /><path d="M8 25 Q8 22.5 11 22.5 H38 Q41 22.5 41 25" /><path d="M14 11 L8 14 L11 19 L14 15 Z"/></g><g transform="translate(2023,720) skewX(7)" stroke="#8e8e94" stroke-width="1.5" fill="none" stroke-linejoin="round" stroke-linecap="round"><rect x="0" y="0" width="45" height="30.5" rx="3.5"/><rect x="7" y="5" width="31" height="6"/><rect x="7" y="15" width="8" height="11"/><rect x="21" y="15" width="17" height="4"/><rect x="21" y="22" width="17" height="4"/></g><g transform="translate(2028,761.5) skewX(7)" stroke="#8e8e94" stroke-width="1.5" fill="none" stroke-linejoin="round" stroke-linecap="round"><rect x="0" y="0" width="45.5" height="31" rx="3.5"/><rect x="13" y="14" width="19" height="11" fill="#a2a2a8" stroke="#a2a2a8"/><path d="M17 14 V10 Q17 6 22.5 6 Q28 6 28 10" stroke-width="2.2" stroke="#a2a2a8"/></g><g transform="translate(2034,803.5) skewX(7)" stroke="#8e8e94" stroke-width="1.5" fill="none" stroke-linejoin="round" stroke-linecap="round"><rect x="0" y="0" width="46" height="32.5" rx="3.5"/><path d="M8 16 L15 7 H31 L38 16 L31 25 H15 Z" stroke-width="1.8"/><ellipse cx="23" cy="16" rx="6.5" ry="4.5" stroke-width="1.8"/></g></svg>
<svg style="left:0;top:0" width="2450" height="1650" viewBox="0 0 2450 1650">
<path d="M1301.6 633.8 L1542 633.8 Q1552 633.8 1559 628.5 L1567 622 Q1572 619 1580 619 L1716 619 Q1724 619 1729 622 L1739 629 Q1746 633.8 1756 633.8 L1993.7 633.8 Q2008.7 634.8 2011.7 649.8 L2080.9 1199 Q2084.9 1220.5 2061.4 1220 L1497 1220 Q1490 1220 1485 1215.5 L1462 1197.5 Q1457 1194.5 1450 1194.5 L1217.5 1194.5 Q1215.5 1194.5 1216.0 1190 L1285.6 649.8 Q1288.6 634.8 1301.6 633.8 Z" fill="#333339"/>
<path d="M1288.0 636.6 L1991.8 636.6 Q2002.8 637.6 2005.0 647.6 L2073.8 1192.6 L1216.5 1192.6 Z" fill="#35343a"/>
<path d="M1288.0 636.6L1216.5 1192.6M1316.0 636.6L1250.0 1192.6M1344.0 636.6L1283.5 1192.6M1371.9 636.6L1317.0 1192.6M1399.9 636.6L1350.5 1192.6M1455.8 636.6L1417.4 1192.6M1483.7 636.6L1450.9 1192.6M1511.7 636.6L1484.4 1192.6M1539.7 636.6L1517.9 1192.6M1595.6 636.6L1584.9 1192.6M1623.5 636.6L1618.4 1192.6M1651.5 636.6L1651.8 1192.6M1679.4 636.6L1685.3 1192.6M1735.4 636.6L1752.3 1192.6M1763.3 636.6L1785.8 1192.6M1791.3 636.6L1819.3 1192.6M1819.2 636.6L1852.8 1192.6M1875.1 636.6L1919.8 1192.6M1903.1 636.6L1953.2 1192.6M1931.1 636.6L1986.7 1192.6M1959.0 636.6L2020.2 1192.6M1219.8 1166.7L2070.5 1166.7M1223.1 1141.3L2067.3 1141.3M1226.3 1116.2L2064.2 1116.2M1229.5 1091.5L2061.1 1091.5M1235.7 1043.2L2055.0 1043.2M1238.8 1019.6L2052.0 1019.6M1241.8 996.4L2049.1 996.4M1244.7 973.5L2046.2 973.5M1250.5 928.6L2040.5 928.6M1253.3 906.7L2037.8 906.7M1256.1 885.0L2035.0 885.0M1258.8 863.7L2032.4 863.7M1264.2 821.9L2027.1 821.9M1266.8 801.5L2024.5 801.5M1269.4 781.3L2022.0 781.3M1272.0 761.4L2019.5 761.4M1277.0 722.4L2014.6 722.4M1279.5 703.3L2012.2 703.3M1281.9 684.5L2009.8 684.5M1284.3 665.9L2007.4 665.9" stroke="#46464e" stroke-width="1.25" fill="none"/>
<path d="M1427.8 636.6L1383.9 1192.6M1567.6 636.6L1551.4 1192.6M1707.4 636.6L1718.8 1192.6M1847.2 636.6L1886.3 1192.6M1987.0 636.6L2053.7 1192.6M2003.8 636.6L2073.8 1192.6M1216.5 1192.6L2073.8 1192.6M1232.6 1067.2L2058.0 1067.2M1247.6 950.9L2043.3 950.9M1261.5 842.7L2029.7 842.7M1274.5 741.8L2017.0 741.8M1286.6 647.5L2005.1 647.5M1288.0 636.6L2003.8 636.6" stroke="#4f4f58" stroke-width="1.8" fill="none"/>
<path d="M1587 631.8 H1709" stroke="#5c5c63" stroke-width="2.4" stroke-linecap="round"/>
<path d="M1464 1192.6 H1960" stroke="#d2d5d4" stroke-width="2.6"/>
<rect x="1491.8" y="1196" width="397.6" height="18" rx="2" fill="#cdd0cf"/>
<path d="M1499 1199 h5 v5 h-5z M1506.5 1199 h5.5 v4 h-5.5z M1499 1206 h5 v6 h-5z M1506.5 1205 h5.5 v7 h-5.5z" fill="#3a3a40"/>
<path d="M1521 1199 h17 v13 h-17z M1524 1202 v7 h6 v-3 h5 v-4 z M1532.5 1208 h3 v2 h-3z" fill="#3a3a40" fill-rule="evenodd"/>
<text x="1547.5" y="1210" font-family="Liberation Sans" font-size="10.5" letter-spacing="2.5" fill="#9a9d9c" textLength="119" lengthAdjust="spacingAndGlyphs">PLA/ABS/PETG</text>
<path d="M1801 1200 L1811 1211.5 H1791.5 Z" fill="none" stroke="#a4a7a6" stroke-width="1"/>
<text x="1817" y="1204.3" font-family="Liberation Sans" font-size="7" fill="#9a9d9c" textLength="24" lengthAdjust="spacingAndGlyphs">HOT</text>
<text x="1817" y="1212" font-family="Liberation Sans" font-size="7" fill="#9a9d9c" textLength="58" lengthAdjust="spacingAndGlyphs">SURFACE</text>
<path d="M1905.5 1202.5 L1912.5 1197.5 L1919.5 1202.5 H1916.5 V1206 H1908.5 V1202.5 Z M1908.5 1207.2 h8 v1.6 h-8z M1908.5 1210 h8 v1.6 h-8z M1945.5 1202.5 L1952.5 1197.5 L1959.5 1202.5 H1956.5 V1206 H1948.5 V1202.5 Z M1948.5 1207.2 h8 v1.6 h-8z M1948.5 1210 h8 v1.6 h-8z" fill="#e4e6e6"/>
<rect x="1925" y="1199" width="15.5" height="12.5" fill="none" stroke="#e4e6e6" stroke-width="2.6"/>
<path d="M1969 1194.5 H1991 L2015.5 1211.5 H1971 Z M2007 1194.5 H2051.5 L2053 1211.5 H2031 Z" fill="#55555a"/>
<!-- cube -->
<path d="M1225.6 1120.8 H1277.5 Q1284 1121 1283.3 1127.5 L1277 1190.6 H1224 Q1218.6 1190.5 1219.2 1185 Z" fill="#c9cbca"/>
<path d="M1223.6 1141.2 H1281.8 M1221.3 1166.6 H1279.400 M1258.3 1120.8 L1250 1190.6" stroke="#6c6d72" stroke-width="1.3" fill="none"/>
<!-- axes -->
<path d="M1215.8 1192.6 L1207.2 1136" stroke="#12129a" stroke-width="3.2"/><path d="M1206 1125.8 L1212 1137.8 L1202.6 1139.2 Z" fill="#12129a"/>
<path d="M1215.8 1192.6 L1223.6 1127" stroke="#12c040" stroke-width="3.2"/><path d="M1224.6 1116.2 L1228.400 1128.8 L1219 1127.8 Z" fill="#12c040"/>
<path d="M1215.8 1192.400 H1304" stroke="#d4101a" stroke-width="3.2"/><path d="M1318 1192.2 L1301.5 1188 V1196.400 Z" fill="#d4101a"/>
</svg>
<div class="t" style="left:2085px;top:1154px;font-size:28px;font-weight:700;-webkit-text-stroke:0;color:#07b348;letter-spacing:0;transform-origin:0 50%;transform:scaleX(1.2)">01</div>

</div></div>
<div class="a" id="rim"></div>
<!--PANEL-->
<style>
#pn{left:1001px;top:195px;width:448px;height:718px;border-radius:13px 13px 16px 16px;overflow:hidden;background:#2d2c29;box-shadow:0 0 0 1px rgba(0,0,0,.85),0 16px 40px 2px rgba(0,0,0,.33),0 0 8px rgba(0,0,0,.22)}
#pi{left:-1001px;top:-195px;width:2450px;height:1650px;will-change:transform}
.sw{left:1053px;width:36px;height:36px;border-radius:6px;box-shadow:inset 0 0 0 1.5px rgba(255,255,255,.22)}
.pt{left:1105.5px;font-size:26px;line-height:32px;letter-spacing:.3px;color:#e4e3e0}
</style>
<div class="a" id="pn"><div class="a" id="pi">
<div class="a" style="left:1001px;top:195px;width:448px;height:103px;background:#383735"></div>
<div class="a" style="left:1001px;top:298px;width:448px;height:2px;background:#161614"></div>
<div class="a" style="left:1001px;top:300px;width:448px;height:138px;background:#2b2a27"></div>
<div class="a" style="left:1001px;top:438px;width:448px;height:273px;background:#22211e;border-top:1.5px solid #403f3b"></div>
<div class="a" style="left:1001px;top:711px;width:448px;height:103px;background:#2d2c29"></div>
<div class="a" style="left:1001px;top:814px;width:448px;height:2.5px;background:#0c0c0b"></div>
<div class="a" style="left:1001px;top:816.5px;width:448px;height:97px;background:#2d2c29"></div>
<!-- traffic lights -->
<div class="a" style="left:1011px;top:205px;width:18px;height:18px;border-radius:50%;background:#fe5a54"></div>
<div class="a" style="left:1041px;top:205px;width:18px;height:18px;border-radius:50%;background:#5c5a57"></div>
<div class="a" style="left:1071px;top:205px;width:18px;height:18px;border-radius:50%;background:#24c840"></div>
<div class="t" style="left:1191.5px;top:199.5px;font-size:22px;line-height:28px;letter-spacing:.5px;color:#b9b8b5">Colors</div>
<!-- icons -->
<div class="a" style="left:1017.5px;top:241.5px;width:39px;height:39px;border-radius:50%;background:radial-gradient(circle at 50% 48%,#fff 0,rgba(255,255,255,.75) 22%,rgba(255,255,255,0) 68%),conic-gradient(from 90deg,#ff2030,#ff20e0,#3030ff,#20e0ff,#20f040,#f0f020,#ff2030);box-shadow:inset 0 -3px 4px rgba(0,0,0,.25)"></div>
<svg style="left:1079px;top:244px" width="45" height="36" viewBox="0 0 45 36"><defs><linearGradient id="gr" x1="0" x2="1"><stop offset="0" stop-color="#f2101a"/><stop offset=".35" stop-color="#f2101a"/><stop offset="1" stop-color="#ffd4d4"/></linearGradient><linearGradient id="gg" x1="0" x2="1"><stop offset="0" stop-color="#14b83c"/><stop offset=".4" stop-color="#22c24a"/><stop offset="1" stop-color="#c8f0cc"/></linearGradient><linearGradient id="gb" x1="0" x2="1"><stop offset="0" stop-color="#1030f0"/><stop offset=".5" stop-color="#3a55f4"/><stop offset="1" stop-color="#c8d0ff"/></linearGradient></defs>
<rect x=".5" y="1.5" width="43.5" height="7" rx="1.5" fill="url(#gr)"/><rect x=".5" y="13.5" width="43.5" height="7" rx="1.5" fill="url(#gg)"/><rect x=".5" y="25.5" width="43.5" height="7" rx="1.5" fill="url(#gb)"/>
<path d="M12.5 4.5 L16.5 0 L20.5 4.5 V9.5 H12.5 Z M18.5 16.5 L22.5 12 L26.5 16.5 V21.5 H18.5 Z M24.5 28.5 L28.5 24 L32.5 28.5 V33.5 H24.5 Z" fill="#fff"/></svg>
<div class="a" style="left:1132px;top:230.5px;width:67px;height:62.5px;border:3.6px solid #f50e16;background:#4a4846"></div>
<svg style="left:1144px;top:241px" width="42" height="41" viewBox="0 0 42 41"><rect x="11.5" y="11.5" width="30" height="29" rx="1" fill="#f4f4f4"/><rect x="28" y="16" width="9" height="9" rx="2" fill="#a9acb0"/><rect x="28" y="28" width="9" height="9" rx="2" fill="#45474a"/><rect x="16" y="28" width="9" height="9" rx="2" fill="#2e3033"/><rect x="0" y="0" width="30" height="29" rx="1" fill="#f8f8f8" stroke="#d8d8d8" stroke-width=".6"/><rect x="5" y="5" width="8.5" height="8.5" rx="1.5" fill="#f4111b"/><rect x="16.5" y="5" width="8.5" height="8.5" rx="1.5" fill="#1fc24e"/><rect x="5" y="16" width="8.5" height="8.5" rx="1.5" fill="#fdb92a"/><rect x="16.5" y="16" width="8.5" height="8.5" rx="1.5" fill="#1f45f0"/></svg>
<svg style="left:1205.5px;top:241.5px" width="47" height="40" viewBox="0 0 47 40"><defs><linearGradient id="sky" x1="0" x2="0" y1="0" y2="1"><stop offset="0" stop-color="#b37aa8"/><stop offset=".45" stop-color="#e8a08a"/><stop offset=".62" stop-color="#f6c080"/><stop offset=".66" stop-color="#d9b4c4"/><stop offset="1" stop-color="#b98aa8"/></linearGradient></defs><rect width="47" height="40" fill="#fafafa"/><rect x="3.5" y="3.5" width="40" height="33" fill="url(#sky)"/><ellipse cx="24" cy="24" rx="12" ry="5" fill="#f8d088" opacity=".7"/><path d="M3.5 24 L8 21 L13 15.2 L17 19 L21 21.5 L26.5 22.8 L31 21.5 L36 19.5 L40 17.5 L43.5 21 V26 H3.5 Z" fill="#262040"/><path d="M13 15.2 L15 20 L11.5 19 Z M40 17.5 L41 21 L37.5 20.5 Z" fill="#5a4a80"/><path d="M3.5 26 H43.5 V27.5 H3.5 Z" fill="#6a5078" opacity=".6"/></svg>
<svg style="left:1274px;top:242px" width="39" height="40" viewBox="0 0 39 40"><path d="M1.6 9.5 L4.4 1.2 L7.2 9.5 Z" fill="#ecc89a"/><path d="M3.4 4.2 L4.4 .8 L5.4 4.2 Z" fill="#e01a22"/><rect x="1.6" y="9" width="5.6" height="18" fill="#e01a22"/><rect x="5.4" y="9" width="1.8" height="18" fill="rgba(0,0,0,.2)"/><rect x="2.2" y="9" width="1.2" height="18" fill="rgba(255,255,255,.25)"/><path d="M7.6 9.5 L10.4 1.2 L13.2 9.5 Z" fill="#ecc89a"/><path d="M9.4 4.2 L10.4 .8 L11.4 4.2 Z" fill="#f0c414"/><rect x="7.6" y="9" width="5.6" height="18" fill="#f0c414"/><rect x="11.4" y="9" width="1.8" height="18" fill="rgba(0,0,0,.2)"/><rect x="8.2" y="9" width="1.2" height="18" fill="rgba(255,255,255,.25)"/><path d="M13.6 9.5 L16.4 1.2 L19.2 9.5 Z" fill="#ecc89a"/><path d="M15.4 4.2 L16.4 .8 L17.4 4.2 Z" fill="#22b43a"/><rect x="13.6" y="9" width="5.6" height="18" fill="#22b43a"/><rect x="17.4" y="9" width="1.8" height="18" fill="rgba(0,0,0,.2)"/><rect x="14.2" y="9" width="1.2" height="18" fill="rgba(255,255,255,.25)"/><path d="M19.6 9.5 L22.4 1.2 L25.2 9.5 Z" fill="#ecc89a"/><path d="M21.4 4.2 L22.4 .8 L23.4 4.2 Z" fill="#18b4ea"/><rect x="19.6" y="9" width="5.6" height="18" fill="#18b4ea"/><rect x="23.4" y="9" width="1.8" height="18" fill="rgba(0,0,0,.2)"/><rect x="20.2" y="9" width="1.2" height="18" fill="rgba(255,255,255,.25)"/><path d="M25.6 9.5 L28.4 1.2 L31.2 9.5 Z" fill="#ecc89a"/><path d="M27.4 4.2 L28.4 .8 L29.4 4.2 Z" fill="#1a3ae0"/><rect x="25.6" y="9" width="5.6" height="18" fill="#1a3ae0"/><rect x="29.4" y="9" width="1.8" height="18" fill="rgba(0,0,0,.2)"/><rect x="26.2" y="9" width="1.2" height="18" fill="rgba(255,255,255,.25)"/><path d="M31.6 9.5 L34.4 1.2 L37.2 9.5 Z" fill="#ecc89a"/><path d="M33.4 4.2 L34.4 .8 L35.4 4.2 Z" fill="#e21ad0"/><rect x="31.6" y="9" width="5.6" height="18" fill="#e21ad0"/><rect x="35.4" y="9" width="1.8" height="18" fill="rgba(0,0,0,.2)"/><rect x="32.2" y="9" width="1.2" height="18" fill="rgba(255,255,255,.25)"/><rect x="0" y="26" width="38.5" height="13.5" fill="#e8e8e8"/><rect x="0" y="37.2" width="38.5" height="2.3" fill="#cfcfcf"/></svg>
<!-- apple dropdown -->
<div class="a" style="left:1017px;top:318.7px;width:362px;height:39.8px;border-radius:10px;background:#636260;box-shadow:0 1px 1.5px rgba(0,0,0,.55),inset 0 1px 0 rgba(255,255,255,.10)"></div>
<div class="t" style="left:1033.5px;top:321px;font-size:26px;line-height:32px;letter-spacing:.4px;color:#e9e8e5">Apple</div>
<div class="a" style="left:1343px;top:322.7px;width:32px;height:31.5px;border-radius:8px;background:linear-gradient(180deg,#1568e0,#0a58d0)"></div>
<svg style="left:1351px;top:327.2px" width="16" height="23" viewBox="0 0 16 23" fill="none" stroke="#fff" stroke-width="2.6" stroke-linecap="round" stroke-linejoin="round"><path d="M2 8.5 L8 2.5 L14 8.5 M2 14.5 L8 20.5 L14 14.5"/></svg>
<svg style="left:1398px;top:325.5px" width="28" height="28" viewBox="0 0 28 28"><circle cx="14" cy="14" r="12.4" fill="none" stroke="#e4e3e0" stroke-width="2"/><circle cx="8.3" cy="14" r="1.9" fill="#e4e3e0"/><circle cx="14" cy="14" r="1.9" fill="#e4e3e0"/><circle cx="19.7" cy="14" r="1.9" fill="#e4e3e0"/></svg>
<!-- search -->
<div class="a" style="left:1018.5px;top:377.5px;width:412.5px;height:39.5px;border-radius:10px;background:#393835;border:1.5px solid #4c4b48"></div>
<svg style="left:1032.5px;top:384.5px" width="26" height="26" viewBox="0 0 26 26" fill="none" stroke="#e4e3e0" stroke-width="2.6" stroke-linecap="round"><circle cx="10.5" cy="10.5" r="8.5"/><path d="M16.8 16.8 L24 24"/></svg>
<div class="t" style="left:1074px;top:381px;font-size:26px;line-height:32px;letter-spacing:0;color:#797875">Search</div>
<!-- list -->
<div class="a" style="left:1001px;top:439.5px;width:448px;height:40px;overflow:hidden"><div class="a sw" style="left:52px;top:-26.5px;background:#08f848"></div><div class="t pt" style="left:104.5px;top:-22.5px">Green</div></div>
<div class="a sw" style="top:453px;background:#fb38f4"></div><div class="t pt" style="top:454.5px">Magenta</div>
<div class="a sw" style="top:493px;background:#fd9128"></div><div class="t pt" style="top:494.5px">Orange</div>
<div class="a sw" style="top:533px;background:#931a8c"></div><div class="t pt" style="top:534.5px">Purple</div>
<div class="a sw" style="top:573px;background:#fb0810"></div><div class="t pt" style="top:574.5px">Red</div>
<div class="a sw" style="top:613px;background:#fefa48"></div><div class="t pt" style="top:614.5px">Yellow</div>
<div class="a" style="left:1021px;top:651px;width:408px;height:40px;border-radius:11px;background:#0058d0"></div>
<div class="a sw" style="top:653px;background:#fff"></div><div class="t pt" style="top:654.5px;color:#fff">White</div>
<!-- opacity -->
<div class="t" style="left:1021px;top:731px;font-size:22px;line-height:28px;letter-spacing:.9px;color:#e4e3e0">Opacity</div>
<div class="a" style="left:1019px;top:773px;width:300px;height:8px;background:#46453f"></div>
<div class="a" style="left:1018.5px;top:769px;width:4.5px;height:16px;background:#56554f"></div>
<div class="a" style="left:1171px;top:769px;width:4.5px;height:16px;background:#56554f"></div>
<div class="a" style="left:1313px;top:761px;width:16.5px;height:32.5px;border-radius:8.5px;background:#9b9a97"></div>
<div class="a" style="left:1343px;top:760px;width:84.5px;height:34.5px;background:#363532;border:1.5px solid #4a4945"></div>
<div class="t" style="left:1352px;top:764px;font-size:23px;line-height:28px;letter-spacing:-.2px;color:#eceae6">100 %</div>
<!-- bottom -->
<div class="a" style="left:1014.5px;top:829px;width:66.5px;height:62px;border-radius:12px;background:#fff"></div>
<svg style="left:1090px;top:844px" width="32" height="32" viewBox="0 0 32 32"><path d="M1.5 30.5 Q.5 27 4 23.5 L16 11.5 L20.5 16 L8.5 28 Q5 31.5 1.5 30.5 Z" fill="#8a8986" stroke="#aaa9a6" stroke-width="1"/><path d="M14.5 8 L24 17.5 L26 15.5 L23.5 13 L29 7.5 Q31.5 4 28.5 1.8 Q25.5 .2 23 3 L18.5 8 L16.5 6 Z" fill="#a8a7a4"/></svg>
<div class="a" style="left:1137.0px;top:832.5px;width:25px;height:25px;border:2px solid #5c5b56;border-radius:4px"></div><div class="a" style="left:1165.0px;top:832.5px;width:25px;height:25px;border:2px solid #5c5b56;border-radius:4px"></div><div class="a" style="left:1193.1px;top:832.5px;width:25px;height:25px;border:2px solid #5c5b56;border-radius:4px"></div><div class="a" style="left:1221.2px;top:832.5px;width:25px;height:25px;border:2px solid #5c5b56;border-radius:4px"></div><div class="a" style="left:1249.2px;top:832.5px;width:25px;height:25px;border:2px solid #5c5b56;border-radius:4px"></div><div class="a" style="left:1277.2px;top:832.5px;width:25px;height:25px;border:2px solid #5c5b56;border-radius:4px"></div><div class="a" style="left:1305.3px;top:832.5px;width:25px;height:25px;border:2px solid #5c5b56;border-radius:4px"></div><div class="a" style="left:1333.3px;top:832.5px;width:25px;height:25px;border:2px solid #5c5b56;border-radius:4px"></div><div class="a" style="left:1361.4px;top:832.5px;width:25px;height:25px;border:2px solid #5c5b56;border-radius:4px"></div><div class="a" style="left:1389.5px;top:832.5px;width:25px;height:25px;border:2px solid #5c5b56;border-radius:4px"></div><div class="a" style="left:1137.0px;top:860.8px;width:25px;height:25px;border:2px solid #5c5b56;border-radius:4px"></div><div class="a" style="left:1165.0px;top:860.8px;width:25px;height:25px;border:2px solid #5c5b56;border-radius:4px"></div><div class="a" style="left:1193.1px;top:860.8px;width:25px;height:25px;border:2px solid #5c5b56;border-radius:4px"></div><div class="a" style="left:1221.2px;top:860.8px;width:25px;height:25px;border:2px solid #5c5b56;border-radius:4px"></div><div class="a" style="left:1249.2px;top:860.8px;width:25px;height:25px;border:2px solid #5c5b56;border-radius:4px"></div><div class="a" style="left:1277.2px;top:860.8px;width:25px;height:25px;border:2px solid #5c5b56;border-radius:4px"></div><div class="a" style="left:1305.3px;top:860.8px;width:25px;height:25px;border:2px solid #5c5b56;border-radius:4px"></div><div class="a" style="left:1333.3px;top:860.8px;width:25px;height:25px;border:2px solid #5c5b56;border-radius:4px"></div><div class="a" style="left:1361.4px;top:860.8px;width:25px;height:25px;border:2px solid #5c5b56;border-radius:4px"></div><div class="a" style="left:1389.5px;top:860.8px;width:25px;height:25px;border:2px solid #5c5b56;border-radius:4px"></div>
</div></div>
<div class="a" style="left:1001px;top:195px;width:448px;height:718px;border-radius:13px 13px 16px 16px;border:1.5px solid rgba(255,255,255,.24);pointer-events:none"></div>
<!--ARROW-->
<svg style="left:0;top:0" width="2450" height="1650" viewBox="0 0 2450 1650"><path d="M91.5 484.6 L1115 294.8" stroke="#f8141a" stroke-width="3.9" fill="none"/><path d="M1129.4 292.1 L1111.8 286.8 L1115 303.4 Z" fill="#f8141a"/></svg>
</body></html>
